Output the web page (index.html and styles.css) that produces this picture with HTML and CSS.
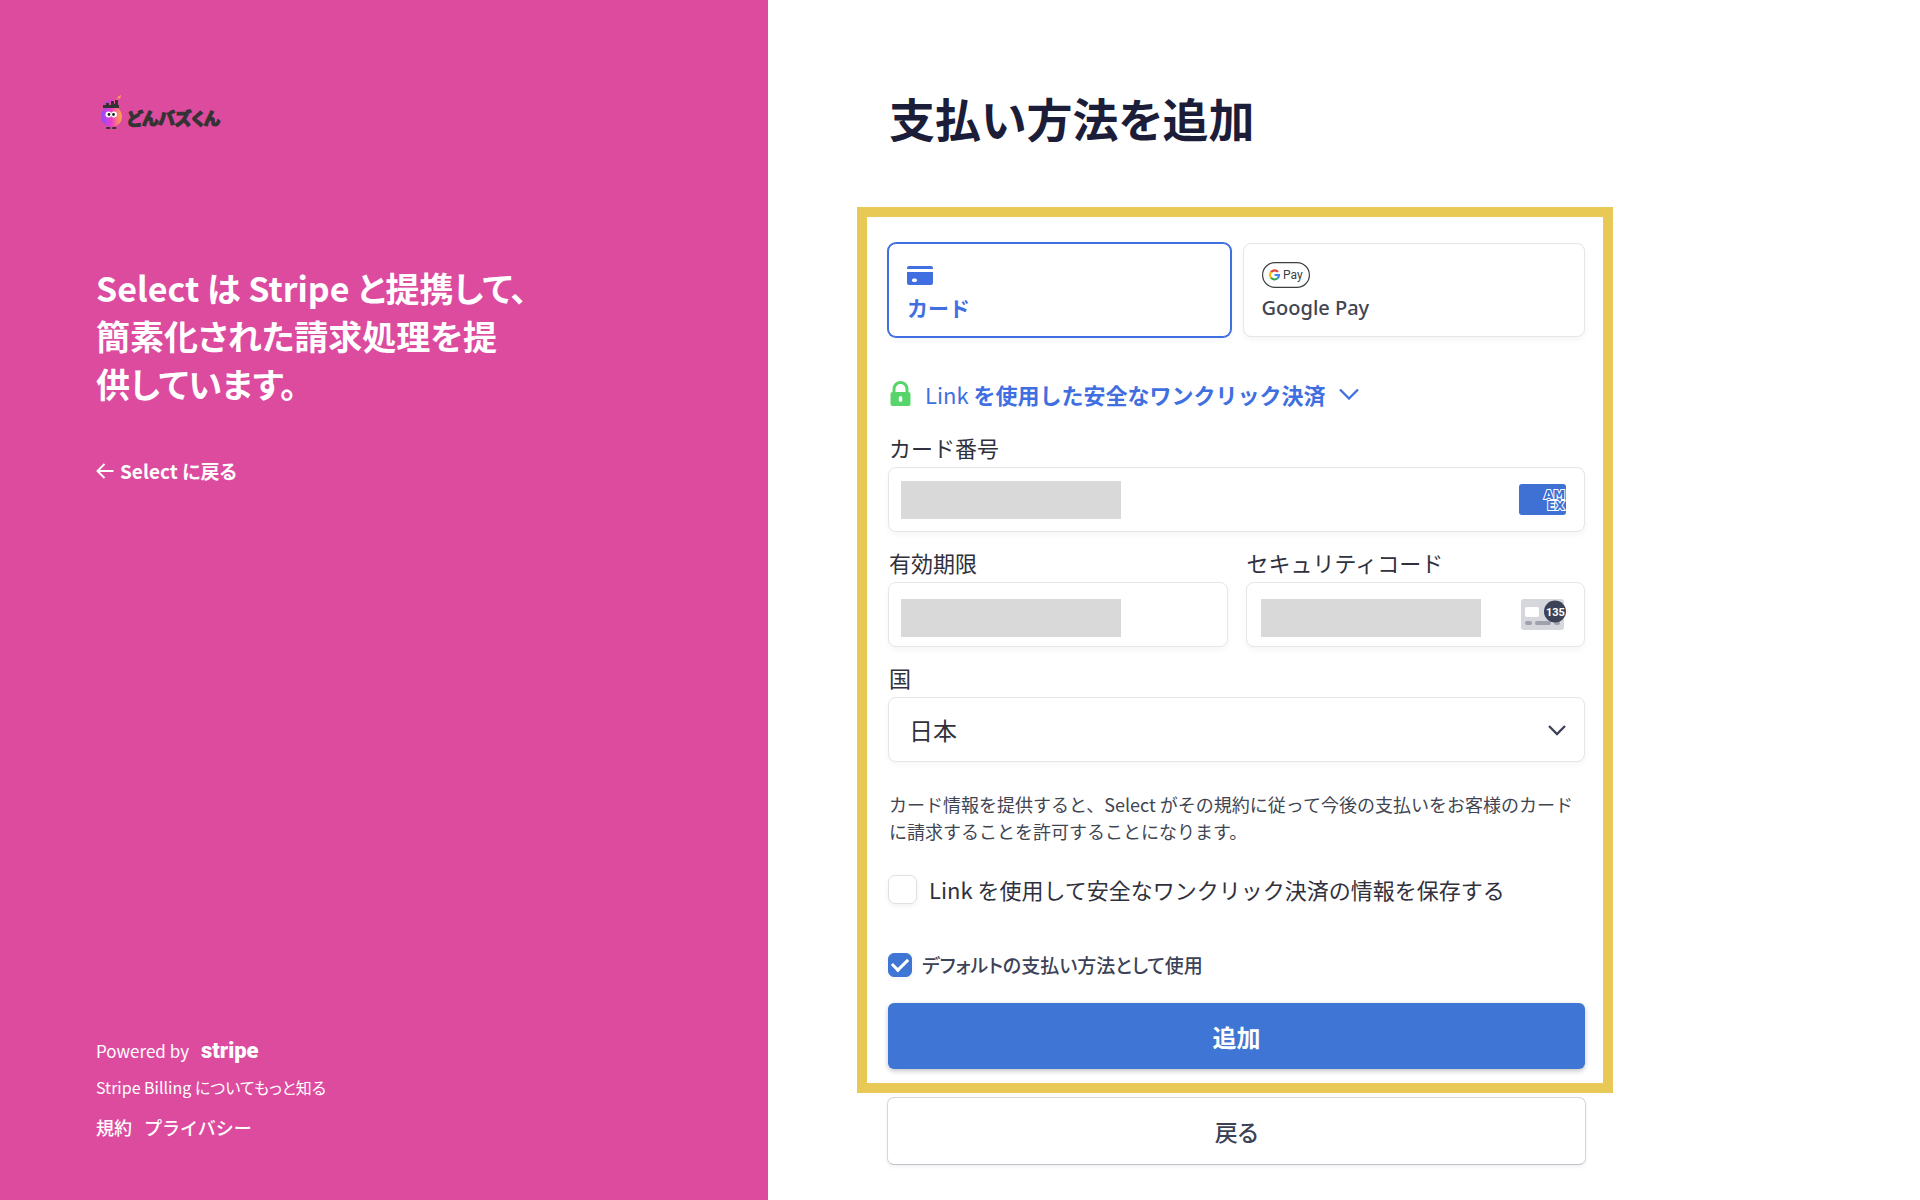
FILE: index.html
```html
<!DOCTYPE html>
<html lang="ja">
<head>
    <meta charset="UTF-8">
    <meta name="viewport" content="width=device-width, initial-scale=1.0">
    <title>支払い方法を追加</title>
    <link rel="stylesheet" href="styles.css">
</head>
<body>
<div class="page">
    <aside class="sidebar">
        <div class="logo">
            <svg width="24" height="36" viewBox="0 0 24 36" aria-hidden="true">
                <defs>
                    <linearGradient id="mascot" x1="0" x2="1">
                        <stop offset="0" stop-color="#8a4dff"/>
                        <stop offset="0.5" stop-color="#f03cc8"/>
                        <stop offset="1" stop-color="#ffb040"/>
                    </linearGradient>
                </defs>
                <path d="M4 9l7-4 3 2 4-3-1-1 4-2-1 4-1-1-5 5-3-2-5 3z" fill="url(#mascot)"/>
                <circle cx="11.500" cy="22.500" r="10.500" fill="url(#mascot)"/>
                <path d="M3 14v-3h3V9h3v2h2V7h3v3h1V6h3v5h1v3z" fill="#333"/>
                <circle cx="8.500" cy="20.500" r="3" fill="#fff"/>
                <circle cx="14" cy="20.500" r="3" fill="#fff"/>
                <circle cx="9" cy="20.500" r="1.400" fill="#222"/>
                <circle cx="13.500" cy="20.500" r="1.400" fill="#222"/>
                <path d="M7 34h2.500M13 34h2.500" stroke="#333" stroke-width="2" stroke-linecap="round"/>
            </svg>
            <span>どんバズくん</span>
        </div>

        <h2>Select は Stripe と提携して、<br>簡素化された請求処理を提<br>供しています。</h2>

        <a class="return-link" href="#">
            <svg width="18" height="16" viewBox="0 0 18 16" aria-hidden="true">
                <path d="M17.500 8H1.500M8.500 1L1.500 8l7 7" fill="none" stroke="#fff" stroke-width="1.900"/>
            </svg>
            Select に戻る
        </a>

        <footer>
            <a class="powered" href="#">Powered by <strong>stripe</strong></a>
            <a class="billing" href="#">Stripe Billing についてもっと知る</a>
            <nav>
                <a href="#">規約</a>
                <a href="#">プライバシー</a>
            </nav>
        </footer>
    </aside>

    <main>
        <h1>支払い方法を追加</h1>

        <form id="paymentForm">
            <div class="highlight">
                <div class="methods">
                    <button type="button" class="method selected">
                        <svg width="26" height="26" viewBox="0 0 26 26" aria-hidden="true">
                            <path d="M0 7V6a2 2 0 0 1 2-2h22a2 2 0 0 1 2 2v1zM0 10h26v11a2 2 0 0 1-2 2H2a2 2 0 0 1-2-2z" fill="#3f6fe0"/>
                            <rect x="5" y="16.500" width="5" height="3.500" rx="1.700" fill="#fff"/>
                        </svg>
                        カード
                    </button>
                    <button type="button" class="method">
                        <svg width="48" height="26" viewBox="0 0 48 26" aria-hidden="true">
                            <rect x="0.600" y="0.600" width="46.800" height="24.800" rx="12.400" fill="#fff" stroke="#3c4043" stroke-width="1.200"/>
                            <g fill="none" stroke-width="2.200">
                                <path d="M9 10.200A4.400 4.400 0 0 1 16 9.900" stroke="#ea4335"/>
                                <path d="M9 15.600A4.400 4.400 0 0 1 9 10.200" stroke="#fbbc04"/>
                                <path d="M15.600 16.300A4.400 4.400 0 0 1 9 15.600" stroke="#34a853"/>
                                <path d="M12.600 13h4.400a4.400 4.400 0 0 1-1.400 3.300" stroke="#4285f4"/>
                            </g>
                            <text class="gpay-text" x="21" y="17">Pay</text>
                        </svg>
                        Google Pay
                    </button>
                </div>

                <button type="button" class="link-toggle">
                    <svg width="22" height="26" viewBox="0 0 22 26" aria-hidden="true">
                        <path d="M4 12V8a6.500 6.500 0 0 1 13 0v4" fill="none" stroke="#57d56b" stroke-width="3"/>
                        <rect x="0.500" y="11" width="20" height="14" rx="2" fill="#57d56b"/>
                        <rect x="8.800" y="15" width="3.400" height="6" rx="1.700" fill="#fff"/>
                    </svg>
                    <span><span class="light">Link</span> を使用した安全なワンクリック決済</span>
                    <svg width="20" height="12" viewBox="0 0 20 12" aria-hidden="true">
                        <path d="M1 1.500l9 9 9-9" fill="none" stroke="#3f6fe0" stroke-width="2.300"/>
                    </svg>
                </button>

                <div class="fields">
                    <div class="field wide">
                        <label for="cardNumber">カード番号</label>
                        <div class="control">
                            <input type="text" id="cardNumber" name="cardNumber">
                            <svg width="47" height="31" viewBox="0 0 47 31" aria-hidden="true">
                                <rect width="47" height="31" rx="3" fill="#3f70d4"/>
                                <text class="amex-text"><tspan x="25" y="15">AM</tspan><tspan x="28" y="26">EX</tspan></text>
                            </svg>
                        </div>
                    </div>
                    <div class="field">
                        <label for="expiry">有効期限</label>
                        <div class="control low">
                            <input type="text" id="expiry" name="expiry">
                        </div>
                    </div>
                    <div class="field">
                        <label for="cvc">セキュリティコード</label>
                        <div class="control low">
                            <input type="text" id="cvc" name="cvc">
                            <svg width="47" height="34" viewBox="0 0 47 34" aria-hidden="true">
                                <rect x="2" y="1" width="43" height="31" rx="3" fill="#d6d7dc"/>
                                <rect x="6" y="9" width="14" height="10" rx="2" fill="#fff"/>
                                <path d="M8 25h3M18 25h12M37 25h2" stroke="#9fa1ae" stroke-width="4" stroke-linecap="round"/>
                                <circle cx="36" cy="13.500" r="11" fill="#3c4257"/>
                                <text class="cvc-text" x="27" y="18">135</text>
                            </svg>
                        </div>
                    </div>
                    <div class="field wide">
                        <label for="country">国</label>
                        <div class="control">
                            <select id="country" name="country">
                                <option>日本</option>
                            </select>
                            <svg width="18" height="12" viewBox="0 0 18 12" aria-hidden="true">
                                <path d="M1 2l8 8 8-8" fill="none" stroke="#3c4257" stroke-width="2.300"/>
                            </svg>
                        </div>
                    </div>
                </div>

                <p class="terms">カード情報を提供すると、Select がその規約に従って今後の支払いをお客様のカードに請求することを許可することになります。</p>

                <div class="check save">
                    <input type="checkbox" id="saveInfo">
                    <label for="saveInfo">Link を使用して安全なワンクリック決済の情報を保存する</label>
                </div>
                <div class="check default">
                    <input type="checkbox" id="useDefault" checked>
                    <label for="useDefault">デフォルトの支払い方法として使用</label>
                </div>

                <button type="submit" class="submit">追加</button>
            </div>

            <button type="button" class="cancel">戻る</button>
        </form>
    </main>
</div>
</body>
</html>
```
FILE: styles.css
```css
* {
    box-sizing: border-box;
}

body {
    margin: 0;
    background-color: #fff;
    color: #30313d;
    font-family: "Noto Sans CJK JP", sans-serif;
    font-size: 22px;
}

button, input, select {
    font: inherit;
    color: inherit;
}

svg {
    display: block;
    flex: none;
}

.page {
    display: grid;
    grid-template-columns: 2fr 3fr;
    min-height: 100vh;
}

/* left side */
.sidebar {
    display: flex;
    flex-direction: column;
    align-items: flex-start;
    padding: 94px 96px 59px;
    background-color: #dd4b9f;
    color: #fff;
    font-feature-settings: "palt";
}

.sidebar a {
    color: #fff;
    text-decoration: none;
}

.logo {
    display: flex;
    align-items: center;
    gap: 3px;
    padding-left: 4px;
    color: #333;
    font-size: 17px;
    font-weight: 900;
    -webkit-text-stroke: 1px #333;
}

.logo span {
    padding-top: 12px;
    line-height: 24px;
}

.sidebar h2 {
    margin: 134px 0 0;
    font-size: 34px;
    font-weight: 700;
    line-height: 48px;
    white-space: nowrap;
}

.return-link {
    display: flex;
    align-items: center;
    gap: 6px;
    margin-top: 49px;
    font-size: 19px;
    font-weight: 700;
    line-height: 28px;
}

footer {
    display: flex;
    flex-direction: column;
    gap: 8px;
    margin-top: auto;
    font-size: 17px;
    line-height: 28px;
}

.powered {
    display: flex;
    gap: 12px;
}

.powered strong {
    font-family: Roboto, sans-serif;
    font-size: 22px;
    font-weight: 900;
}

.billing {
    font-size: 16px;
}

footer nav {
    display: flex;
    gap: 12px;
    margin-top: 4px;
    font-size: 18px;
    font-weight: 500;
    font-feature-settings: normal;
}

/* right side */
main {
    padding: 82px 89px 32px;
}

h1 {
    margin: 0 0 55px 32px;
    color: #1c1d38;
    font-size: 46px;
    font-weight: 700;
    line-height: 70px;
    font-feature-settings: "palt";
}

form {
    display: flex;
    flex-direction: column;
    max-width: 756px;
}

.highlight {
    display: flex;
    flex-direction: column;
    padding: 26px 18px 14px 21px;
    border: 10px solid #e9c955;
}

.methods {
    display: grid;
    grid-template-columns: 1fr 1fr;
    gap: 12px;
}

.method {
    display: flex;
    flex-direction: column;
    align-items: flex-start;
    gap: 4px;
    height: 94px;
    padding: 18px;
    border: 1px solid #e6e6e6;
    border-radius: 8px;
    background-color: #fff;
    box-shadow: 0 3px 6px rgba(0, 0, 0, 0.04);
    color: #414552;
    font-family: "Noto Sans", "Noto Sans CJK JP", sans-serif;
    font-size: 20px;
    font-weight: 500;
    line-height: 32px;
}

.method.selected {
    border-color: #3f6fe0;
    box-shadow: 0 0 0 1px #3f6fe0, 0 3px 6px rgba(0, 0, 0, 0.04);
    color: #3f6fe0;
    font-size: 21px;
    font-weight: 700;
}

.gpay-text {
    fill: #3c4043;
    font-family: Roboto, sans-serif;
    font-size: 12px;
    font-weight: 400;
}

.link-toggle {
    display: flex;
    align-items: center;
    gap: 13px;
    margin-top: 41px;
    padding: 0 0 0 2px;
    border: none;
    background: none;
    color: #3f6fe0;
    font-weight: 700;
    line-height: 32px;
}

.light {
    font-weight: 400;
}

.fields {
    display: grid;
    grid-template-columns: 1fr 1fr;
    gap: 15px 18px;
    margin-top: 22px;
}

.field {
    display: flex;
    flex-direction: column;
    gap: 5px;
}

.field label {
    padding-left: 1px;
    line-height: 30px;
}

.wide {
    grid-column: 1 / -1;
}

.control {
    position: relative;
}

.control svg {
    position: absolute;
    top: 0;
    right: 19px;
    bottom: 0;
    margin: auto 0;
}

.control input, .control select {
    display: block;
    width: 100%;
    height: 65px;
    padding: 0 20px;
    border: 1px solid #e6e6e6;
    border-radius: 8px;
    background-color: #fff;
    box-shadow: 0 3px 6px rgba(0, 0, 0, 0.04);
    font-size: 24px;
    appearance: none;
}

/* values are masked out */
.control input {
    background-image: linear-gradient(#d9d9d9, #d9d9d9);
    background-repeat: no-repeat;
    background-position: 12px 13px;
    background-size: 220px 38px;
}

.control.low input {
    background-position-y: 16px;
}

#cvc {
    background-position-x: 14px;
}

.amex-text {
    fill: #3f70d4;
    stroke: #fff;
    stroke-width: 2px;
    paint-order: stroke;
    font-family: "DejaVu Sans", sans-serif;
    font-size: 12px;
    font-weight: 700;
}

.cvc-text {
    fill: #fff;
    font-family: Roboto, sans-serif;
    font-size: 11px;
    font-weight: 700;
}

.terms {
    margin: 29px 0 0 1px;
    color: #414552;
    font-size: 18px;
    line-height: 27px;
}

.check {
    display: flex;
    align-items: center;
}

.check input {
    display: grid;
    place-items: center;
    flex: none;
    margin: 0;
    border: 1px solid #e0e0e0;
    background-color: #fff;
    box-shadow: 0 2px 5px rgba(0, 0, 0, 0.06);
    appearance: none;
}

.save {
    gap: 12px;
    margin-top: 28px;
    line-height: 32px;
}

.save input {
    width: 29px;
    height: 29px;
    border-radius: 7px;
}

.default {
    gap: 10px;
    margin-top: 45px;
    color: #3c4257;
    font-size: 19px;
    font-weight: 500;
    line-height: 30px;
    font-feature-settings: "palt";
}

.default input {
    width: 24px;
    height: 24px;
    border-radius: 6px;
}

.check input:checked {
    border-color: #3f76d5;
    background-color: #3f76d5;
}

.check input:checked::before {
    content: "";
    width: 13px;
    height: 7px;
    margin-bottom: 4px;
    border: solid #fff;
    border-width: 0 0 3px 3px;
    transform: rotate(-45deg);
}

.submit {
    height: 66px;
    margin-top: 23px;
    border: none;
    border-radius: 6px;
    background-color: #3f76d5;
    box-shadow: 0 2px 5px rgba(0, 0, 0, 0.24);
    color: #fff;
    font-size: 24px;
    font-weight: 700;
}

.cancel {
    height: 68px;
    margin: 4px 27px 0 30px;
    border: 1px solid #d5d6dc;
    border-bottom-color: #bfc0c8;
    border-radius: 7px;
    background-color: #fff;
    box-shadow: 0 2px 4px rgba(0, 0, 0, 0.06);
    color: #3c4257;
    font-size: 23px;
    font-weight: 500;
    font-feature-settings: "palt";
}
```
